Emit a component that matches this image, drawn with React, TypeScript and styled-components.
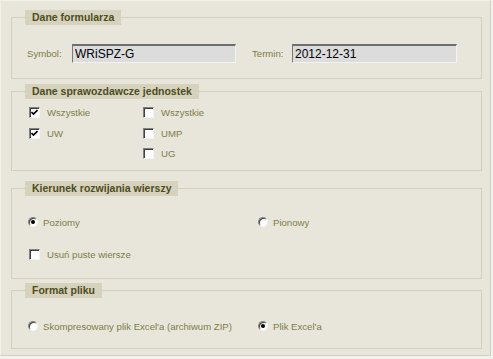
import React from 'react';
import styled, { createGlobalStyle } from 'styled-components';

const GlobalStyle = createGlobalStyle`
  html, body {
    margin: 0;
    padding: 0;
    background: #f2f1eb;
  }
  * {
    box-sizing: border-box;
  }
`;

const App = () => {
  return (
    <>
      <GlobalStyle />
      <Panel>
        <Section $h={69} $mt={0}>
          <Legend>Dane formularza</Legend>
          <FieldRow>
            <FieldGroup>
              <FieldLabel $w={45}>Symbol:</FieldLabel>
              <TextInput $w={164} readOnly value="WRiSPZ-G" />
            </FieldGroup>
            <FieldGroup>
              <FieldLabel $w={40}>Termin:</FieldLabel>
              <TextInput $w={165} readOnly value="2012-12-31" />
            </FieldGroup>
          </FieldRow>
        </Section>

        <Section $h={87} $mt={5}>
          <Legend>Dane sprawozdawcze jednostek</Legend>
          <CheckGrid>
            <Option>
              <CheckBox $checked />
              <CheckText>Wszystkie</CheckText>
            </Option>
            <Option>
              <CheckBox />
              <CheckText>Wszystkie</CheckText>
            </Option>
            <Option>
              <CheckBox $checked />
              <CheckText>UW</CheckText>
            </Option>
            <Option>
              <CheckBox />
              <CheckText>UMP</CheckText>
            </Option>
            <span />
            <Option>
              <CheckBox />
              <CheckText>UG</CheckText>
            </Option>
          </CheckGrid>
        </Section>

        <Section $h={98} $mt={10}>
          <Legend>Kierunek rozwijania wierszy</Legend>
          <ChoiceGrid $mt={16} $rows="20px 12px 20px">
            <Option>
              <Radio $checked />
              <RadioText>Poziomy</RadioText>
            </Option>
            <Option>
              <Radio />
              <RadioText>Pionowy</RadioText>
            </Option>
            <span />
            <span />
            <Option>
              <CheckBox />
              <CheckText>Usuń puste wiersze</CheckText>
            </Option>
          </ChoiceGrid>
        </Section>

        <Section $h={66} $mt={4}>
          <Legend>Format pliku</Legend>
          <ChoiceGrid $mt={18} $rows="20px">
            <Option>
              <Radio />
              <RadioText>Skompresowany plik Excel'a (archiwum ZIP)</RadioText>
            </Option>
            <Option>
              <Radio $checked />
              <RadioText>Plik Excel'a</RadioText>
            </Option>
          </ChoiceGrid>
        </Section>
      </Panel>
    </>
  );
};

const Panel = styled.div`
  width: 491px;
  height: 356px;
  padding: 9px 0 0 10px;
  background: #e8e6db;
  border-top: 1px solid #f1f0ea;
  border-left: 1px solid #f1f0ea;
  border-right: 1px solid #d2cfbf;
  border-bottom: 1px solid #d2cfbf;
  font-family: 'Liberation Sans', Arial, sans-serif;
`;

const Section = styled.fieldset<{ $h: number; $mt: number }>`
  display: block;
  width: 471px;
  height: ${(p) => p.$h}px;
  margin: ${(p) => p.$mt}px 0 0 0;
  padding: 0 0 0 13px;
  border: 1px solid #d3d0bf;
  min-width: 0;
`;

const Legend = styled.legend`
  height: 15px;
  padding: 0 7px;
  line-height: 15px;
  background: #d6d2bd;
  color: #4d4d1d;
  font-size: 10.5px;
  font-weight: 700;
`;

const FieldRow = styled.div`
  display: flex;
  gap: 16px;
  margin-top: 19px;
  padding-left: 2px;
`;

const FieldGroup = styled.div`
  display: flex;
  align-items: center;
`;

const FieldLabel = styled.span<{ $w: number }>`
  width: ${(p) => p.$w}px;
  color: #7d7d48;
  font-size: 9.6px;
`;

const TextInput = styled.input<{ $w: number }>`
  width: ${(p) => p.$w}px;
  height: 19px;
  margin: 0;
  padding: 0 0 0 2px;
  background: #dcdcdc;
  border-style: solid;
  border-width: 2px 1px 1px 1px;
  border-color: #6e6e6e #f2f2f2 #f2f2f2 #7a7a7a;
  color: #000;
  font-family: 'Liberation Sans', Arial, sans-serif;
  font-size: 12px;
  outline: none;
`;

const CheckGrid = styled.div`
  display: grid;
  grid-template-columns: 114px auto;
  grid-template-rows: 21px 20px 20px;
  align-items: center;
  margin-top: 3px;
  padding-left: 4px;
`;

const ChoiceGrid = styled.div<{ $mt: number; $rows: string }>`
  display: grid;
  grid-template-columns: 230px auto;
  grid-template-rows: ${(p) => p.$rows};
  align-items: center;
  margin-top: ${(p) => p.$mt}px;
  padding-left: 4px;
`;

const Option = styled.label`
  display: flex;
  align-items: center;
`;

const CheckText = styled.span`
  margin-left: 7px;
  color: #7d7d48;
  font-size: 9.6px;
`;

const RadioText = styled.span`
  margin-left: 5px;
  color: #7d7d48;
  font-size: 9.6px;
`;

const CheckBoxFrame = styled.span`
  display: inline-flex;
  align-items: center;
  justify-content: center;
  width: 11px;
  height: 11px;
  background: #fff;
  border-style: solid;
  border-width: 1px;
  border-color: #808080 #f4f4f4 #f4f4f4 #808080;
  box-shadow: inset 1px 1px 0 #404040;
`;

const CheckBox = ({ $checked }: { $checked?: boolean }) => (
  <CheckBoxFrame>
    {$checked && (
      <svg width="7" height="7" viewBox="0 0 7 7">
        <path d="M0.5 3 L2.5 5 L6.5 1" fill="none" stroke="#000" strokeWidth="1.6" />
      </svg>
    )}
  </CheckBoxFrame>
);

const RadioFrame = styled.span<{ $checked?: boolean }>`
  display: inline-flex;
  align-items: center;
  justify-content: center;
  width: 10px;
  height: 10px;
  margin-left: -1px;
  border-radius: 50%;
  background: #fff;
  border-style: solid;
  border-width: 1px;
  border-color: #808080 #f4f4f4 #f4f4f4 #808080;
  box-shadow: inset 1px 1px 0 #404040;

  &::after {
    content: '';
    display: ${(p) => (p.$checked ? 'block' : 'none')};
    width: 4px;
    height: 4px;
    border-radius: 50%;
    background: #000;
  }
`;

const Radio = ({ $checked }: { $checked?: boolean }) => <RadioFrame $checked={$checked} />;

export default App;
